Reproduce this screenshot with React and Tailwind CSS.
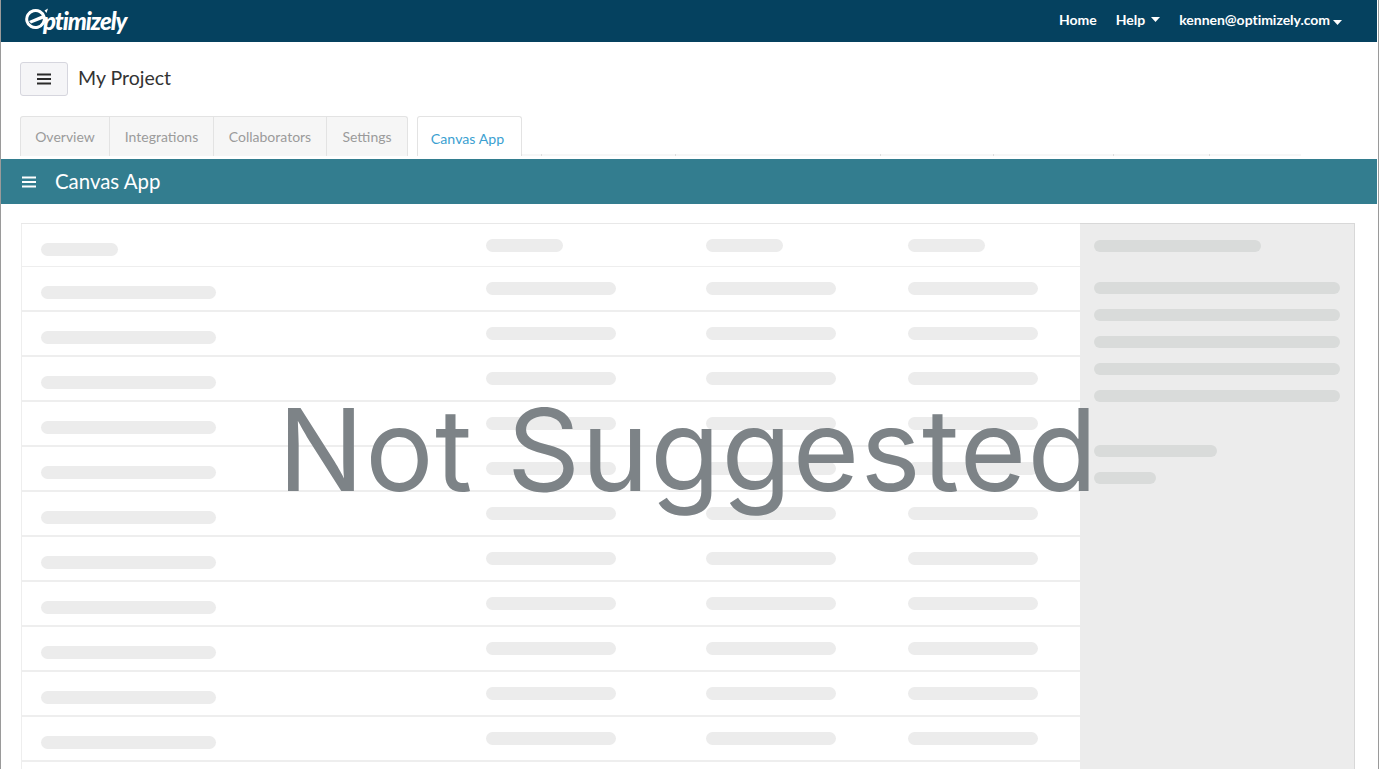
const F = { fontFamily: '"Lato", "Liberation Sans", sans-serif' };

function Bar({ w, className = "" }) {
  return <div className={"h-[13px] rounded-full bg-[#ececec] shrink-0 " + w + " " + className} />;
}

function SideBar({ w, className = "" }) {
  return <div className={"h-[12px] rounded-full bg-[#d9dbda] " + w + " " + className} />;
}

function Caret({ className = "" }) {
  return (
    <svg width="9" height="5" viewBox="0 0 9 5" className={className}>
      <path d="M0 0h9L4.5 5z" fill="#fff" />
    </svg>
  );
}

function Menu({ color, w = 14 }) {
  return (
    <svg width={w} height="12" viewBox="0 0 14 12" fill={color}>
      <rect x="0" y="0.5" width="14" height="2" />
      <rect x="0" y="5" width="14" height="2" />
      <rect x="0" y="9.5" width="14" height="2" />
    </svg>
  );
}

function Logo() {
  return (
    <div className="flex items-center">
      <svg width="23" height="22" viewBox="0 0 23 22" className="shrink-0 -mr-[5px] -mt-[4px]">
        <ellipse cx="10.5" cy="11" rx="8.8" ry="8.5" fill="none" stroke="#fff" strokeWidth="3" transform="rotate(-15 10.5 11)" />
        <path d="M4 13 L18 7 L20 10 L6 15.5z" fill="#fff" />
        <path d="M19.5 2.5 L23 0.5 L21.5 5z" fill="#fff" />
      </svg>
      <span className="text-[24px] font-black italic text-white tracking-[-1.05px] leading-none">ptimizely</span>
    </div>
  );
}

function Tab({ w, children }) {
  return (
    <div className={"h-[40px] bg-[#f6f6f6] border border-b-0 border-[#e3e3e3] -ml-px first:ml-0 first:rounded-tl-[3px] last:rounded-tr-[3px] flex items-center justify-center text-[14px] text-[#9b9b9b] pb-[1px] " + w}>
      {children}
    </div>
  );
}

function Row({ first }) {
  if (first) {
    return (
      <div className="h-[43px] border-b border-[#eee] flex pl-[19px] shrink-0">
        <div className="w-[445px] pt-[19px]"><Bar w="w-[77px]" /></div>
        <div className="w-[220px] pt-[15px]"><Bar w="w-[77px]" /></div>
        <div className="w-[202px] pt-[15px]"><Bar w="w-[77px]" /></div>
        <div className="pt-[15px]"><Bar w="w-[77px]" /></div>
      </div>
    );
  }
  return (
    <div className="h-[45px] border-b-2 border-[#eee] flex pl-[19px] shrink-0">
      <div className="w-[445px] pt-[19px]"><Bar w="w-[175px]" /></div>
      <div className="w-[220px] pt-[15px]"><Bar w="w-[130px]" /></div>
      <div className="w-[202px] pt-[15px]"><Bar w="w-[130px]" /></div>
      <div className="pt-[15px]"><Bar w="w-[130px]" /></div>
    </div>
  );
}

export default function App() {
  const rows = Array.from({ length: 12 });
  const ghosts = ["w-[20px]", "w-[134px]", "w-[205px]", "w-[113px]", "w-[120px]", "w-[96px]", "w-[92px]"];
  return (
    <div style={F} className="relative h-[769px] overflow-hidden bg-white border-l border-r border-[#9a9a9a] flex flex-col">
      <nav className="h-[42px] bg-[#05415f] mr-px flex items-center justify-between pl-[24px] pr-[35px] shrink-0">
        <Logo />
        <div className="flex items-center text-white text-[14px] font-bold -mt-[3px]">
          <span>Home</span>
          <span className="ml-[19px]">Help</span>
          <Caret className="ml-[6px]" />
          <span className="ml-[19px] tracking-[-0.03px]">kennen@optimizely.com</span>
          <Caret className="ml-[3px] mt-[6px]" />
        </div>
      </nav>

      <header className="flex items-center h-[34px] mt-[20px] ml-[19px] shrink-0">
        <button className="w-[48px] h-[34px] bg-[#f5f5f7] border border-[#d6d6de] rounded-[3px] flex items-center justify-center">
          <Menu color="#2a2a2a" />
        </button>
        <h1 className="ml-[10px] text-[19.5px] text-[#333] font-normal -mt-[3px]">My Project</h1>
      </header>

      <div className="flex items-end ml-[19px] mt-[20px] h-[40px] shrink-0">
        <div className="flex">
          <Tab w="w-[90px]">Overview</Tab>
          <Tab w="w-[105px]">Integrations</Tab>
          <Tab w="w-[114px]">Collaborators</Tab>
          <Tab w="w-[82px]">Settings</Tab>
        </div>
        <div className="ml-[9px] w-[105px] h-[40px] bg-white border border-b-0 border-[#e3e3e3] rounded-t-[3px] flex items-center justify-center text-[14.2px] text-[#3b9fd1] pt-[4px] pr-[4px]">
          Canvas App
        </div>
        <div className="flex -ml-px">
          {ghosts.map((w, i) => (
            <div key={i} className={"h-[2px] bg-[#f7f7f7] border-l border-[#dedede] " + w} />
          ))}
        </div>
      </div>

      <div className="h-[45px] mt-[3px] mr-px bg-[#337d8f] flex items-center pl-[21px] shrink-0">
        <Menu color="#fff" />
        <span className="ml-[19px] text-[20.4px] text-white -mt-[1px]">Canvas App</span>
      </div>

      <main className="flex flex-1 min-h-0 ml-[20px] mr-[23px] mt-[19px] border-t border-[#e8e8e8]">
        <div className="w-[1059px] border-l border-[#eee] flex flex-col">
          {rows.map((_, i) => (
            <Row key={i} first={i === 0} />
          ))}
        </div>
        <aside className="flex-1 bg-[#ececec] border-r border-[#d8d8d8] pt-[16px] pl-[14px] pr-[14px] -mt-px border-t">
          <SideBar w="w-[167px]" />
          <div className="mt-[30px] flex flex-col gap-[15px]">
            <SideBar w="w-full" />
            <SideBar w="w-full" />
            <SideBar w="w-full" />
            <SideBar w="w-full" />
            <SideBar w="w-full" />
          </div>
          <div className="mt-[43px] flex flex-col gap-[15px]">
            <SideBar w="w-[123px]" />
            <SideBar w="w-[62px]" />
          </div>
        </aside>
      </main>

      <div style={{ fontFamily: '"Inter", "Liberation Sans", sans-serif' }} className="absolute left-[277px] top-[381px] text-[114px] leading-[138px] font-normal tracking-[1.35px] text-[#7d8387] whitespace-nowrap">
        Not Suggested
      </div>
    </div>
  );
}
